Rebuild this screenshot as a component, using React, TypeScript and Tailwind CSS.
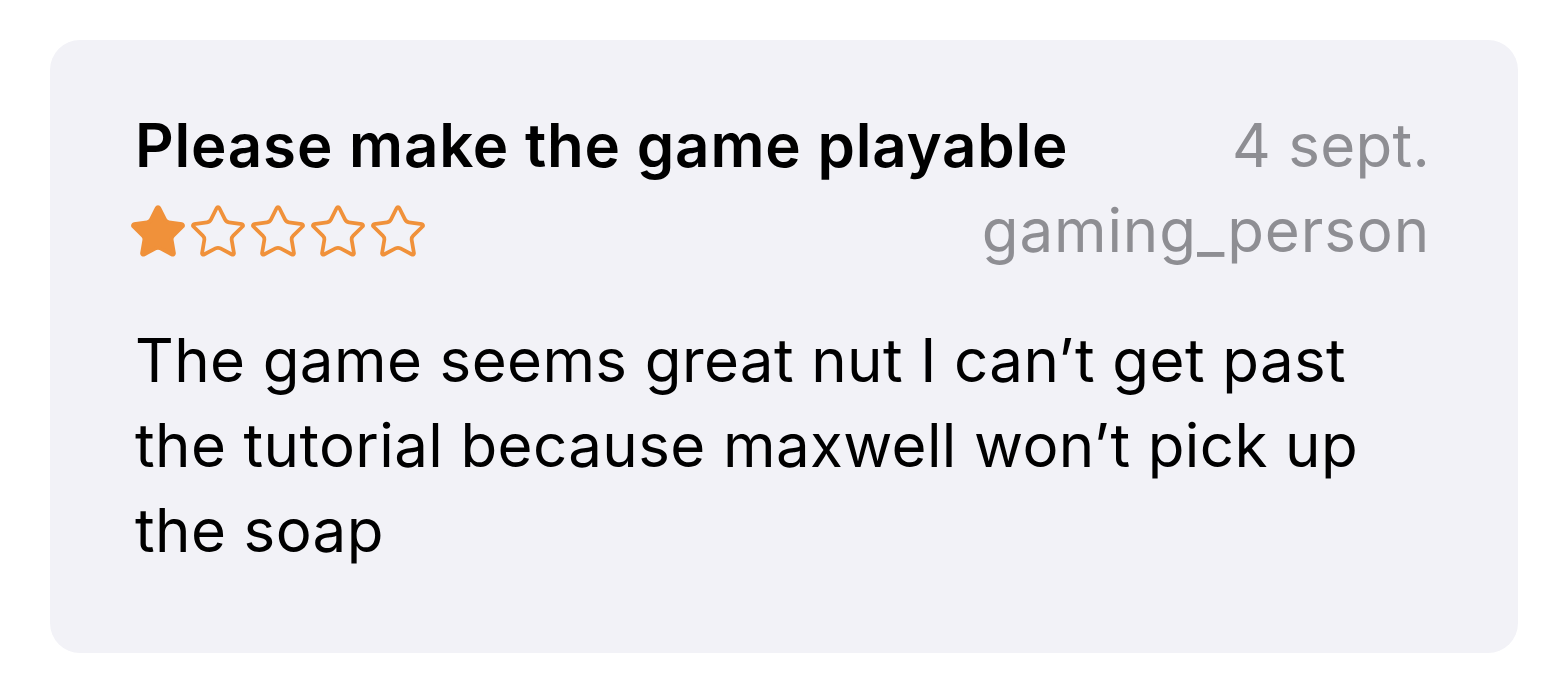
import { Star } from 'lucide-react';

const review = {
  title: 'Please make the game playable',
  date: '4 sept.',
  author: 'gaming_person',
  rating: 1,
  body: 'The game seems great nut I can\u2019t get past the tutorial because maxwell won\u2019t pick up the soap',
};

function Stars({ rating }: { rating: number }) {
  return (
    <div className="flex items-center -ml-[9px] mt-[2px]">
      {[0, 1, 2, 3, 4].map((i) => (
        <Star
          key={i}
          size={60}
          strokeWidth={1.5}
          className="text-[#f0913a] shrink-0"
          fill={i < rating ? '#f0913a' : 'none'}
        />
      ))}
    </div>
  );
}

export default function App() {
  return (
    <div className="min-h-screen bg-white pt-[40px] pl-[50px] font-['Inter','Liberation_Sans',sans-serif]">
      <div className="w-[1468px] h-[613px] rounded-[30px] bg-[#f2f2f7] pt-[63px] pl-[87px] pr-[88px]">
        <div className="flex items-center justify-between leading-[85px] text-[60px]">
          <h2 className="font-semibold text-black tracking-[0.8px] -ml-[2px]">{review.title}</h2>
          <span className="text-[#8e8e93] tracking-[0.3px]">{review.date}</span>
        </div>
        <div className="flex items-center justify-between leading-[85px] text-[60px]">
          <Stars rating={review.rating} />
          <span className="text-[#8e8e93] tracking-[0.9px]">{review.author}</span>
        </div>
        <p className="mt-[45px] w-[1260px] text-[60px] leading-[85px] text-black tracking-[0.4px] -ml-[2px]">
          {review.body}
        </p>
      </div>
    </div>
  );
}
